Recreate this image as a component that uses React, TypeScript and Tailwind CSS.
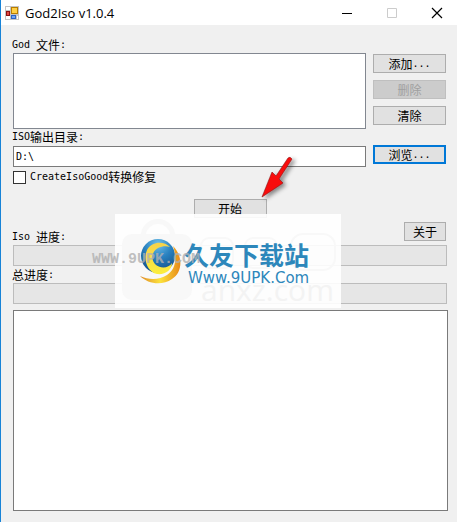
import React, { useState } from "react";

type ButtonProps = {
  label: string;
  suffix?: string;
  disabled?: boolean;
  focused?: boolean;
  className?: string;
};

// Latin glyphs run smaller than the Chinese ones so that both share a 6px / 12px grid
function Latin({ children }: { children: React.ReactNode }) {
  return <span className="font-['DejaVu_Sans_Mono',monospace] text-[10px] whitespace-pre">{children}</span>;
}

function FormButton({ label, suffix, disabled, focused, className = "w-full" }: ButtonProps) {
  return (
    <button
      type="button"
      disabled={disabled}
      className={`flex h-[19px] items-center justify-center leading-4 ${className} ${
        focused
          ? "border-2 border-[#0078d7] bg-[#e1e1e1]"
          : disabled
          ? "border border-[#bfbfbf] bg-[#cccccc] text-[#a0a0a0]"
          : "border border-[#adadad] bg-[#e1e1e1]"
      }`}
    >
      {label}
      {suffix && <Latin>{suffix}</Latin>}
    </button>
  );
}

function ProgressBar({ label, value }: { label: string; value: number }) {
  return (
    <div
      role="progressbar"
      aria-label={label}
      aria-valuenow={value}
      className="h-[21px] border border-[#bcbcbc] bg-[#e6e6e6]"
    >
      <div className="h-full bg-[#06b025]" style={{ width: `${value}%` }} />
    </div>
  );
}

function AppIcon() {
  return (
    <svg className="h-[14px] w-[15px]" viewBox="0 0 15 14" shapeRendering="crispEdges">
      <rect width="14" height="14" fill="#c4c4c4" />
      <path d="M1 1h4v3H1zM1 10h4v3H1zM12 10h1v3h-1z" fill="#fff" />
      <rect x="6" y="1" width="7" height="7" fill="#b87d00" />
      <rect x="7" y="2" width="5" height="5" fill="#ffd045" />
      <rect x="1" y="5" width="4" height="5" fill="#8d1010" />
      <rect x="2" y="6" width="2" height="3" fill="#e04a40" />
      <rect x="6" y="9" width="5" height="4" fill="#2c62c4" />
      <rect x="7" y="10" width="3" height="2" fill="#6ea4f4" />
    </svg>
  );
}

function TitleBar() {
  return (
    <header className="flex h-[25px] items-center gap-[5px] bg-white pl-1">
      <AppIcon />
      <h1 className="flex-1 font-['Open_Sans',sans-serif] text-[13px] leading-6">God2Iso v1.0.4</h1>
      <button type="button" aria-label="Minimize" className="flex w-10 justify-center">
        <svg className="h-3 w-3" viewBox="0 0 12 12" shapeRendering="crispEdges">
          <path d="M1 6h10v1H1z" />
        </svg>
      </button>
      <button type="button" aria-label="Maximize" disabled className="flex w-10 justify-center">
        <svg className="h-3 w-3" viewBox="0 0 12 12" fill="none" stroke="#cccccc">
          <path d="M1.5 1.5h9v9h-9z" />
        </svg>
      </button>
      <button type="button" aria-label="Close" className="flex w-10 justify-center">
        <svg className="h-3 w-3" viewBox="0 0 12 12" stroke="#000" strokeWidth="1.2">
          <path d="M1 1l10 10M11 1L1 11" />
        </svg>
      </button>
    </header>
  );
}

function Pointer() {
  return (
    <svg className="absolute -top-15 left-[145px] h-12 w-9 overflow-visible" viewBox="0 0 36 48">
      <defs>
        <filter id="pointer-shadow" x="-30%" y="-30%" width="180%" height="180%">
          <feDropShadow dx="3" dy="2" stdDeviation="2" floodOpacity="0.45" />
        </filter>
      </defs>
      <path
        d="M2 43L12 18L16 22L28 4Q30 2 32 5L19 25L23 29Z"
        fill="#f80808"
        stroke="#8a1010"
        strokeWidth="0.6"
        filter="url(#pointer-shadow)"
      />
    </svg>
  );
}

function Globe() {
  return (
    <svg className="h-12 w-[45px] shrink-0" viewBox="0 0 45 48">
      <defs>
        <radialGradient id="globe-blue" cx="0.5" cy="0.15" r="0.8">
          <stop offset="0" stopColor="#6fc0ea" />
          <stop offset="0.5" stopColor="#2a82c0" />
          <stop offset="1" stopColor="#15558f" />
        </radialGradient>
        <linearGradient id="globe-gold" x1="0" y1="0" x2="0" y2="1">
          <stop offset="0" stopColor="#f6d24a" />
          <stop offset="1" stopColor="#fbee3e" />
        </linearGradient>
        <linearGradient id="globe-orange" x1="0" y1="0" x2="1" y2="0">
          <stop offset="0" stopColor="#e08a28" />
          <stop offset="0.5" stopColor="#fce23c" />
          <stop offset="1" stopColor="#e88a18" />
        </linearGradient>
      </defs>
      <circle cx="19" cy="18" r="17" fill="url(#globe-blue)" />
      <path
        d="M31 9C25 3 13 3 8 12C4 21 8 34 18 36C26 37 33 32 33 25C30 30 22 31 17 27C11 22 13 13 19 10C23 8 28 8 31 9Z"
        fill="url(#globe-gold)"
      />
      <path
        d="M34 8C44 18 44 34 33 41C23 48 9 46 1 38C10 42 20 42 28 37C37 31 38 20 34 8Z"
        fill="url(#globe-orange)"
      />
    </svg>
  );
}

function Watermark() {
  return (
    <div className="absolute top-[214px] left-[114px] h-[94px] w-[226px] bg-white/90">
      <Pointer />
      <svg className="absolute top-0 left-0 h-full w-full" viewBox="0 0 226 94" fill="none">
        <rect x="7" y="20" width="70" height="66" rx="10" fill="#f8f8f8" />
        <path d="M28 24c0-22 30-22 30 0" stroke="#f8f8f8" strokeWidth="5" />
        <g stroke="#f8f8f8" strokeWidth="2">
          <rect x="86" y="24" width="32" height="30" rx="8" />
          <rect x="130" y="24" width="32" height="30" rx="8" />
          <rect x="176" y="20" width="44" height="36" rx="12" />
        </g>
      </svg>
      <span className="absolute top-15 left-[86px] font-['Open_Sans',sans-serif] text-[30px] leading-8 text-[#f3f3f3]">
        anxz.com
      </span>
      <div className="absolute top-6 left-6 flex">
        <Globe />
        <div className="whitespace-nowrap text-[#2d87bb]">
          <p className="text-[25px] leading-8 font-bold">久友下载站</p>
          <p className="pl-1 font-['DejaVu_Sans',sans-serif] text-[15px] leading-4">Www.9UPK.Com</p>
        </div>
      </div>
      <span className="absolute top-9 -left-[23px] font-['Liberation_Mono',monospace] text-[15px] leading-5 font-bold text-[#b0b0b0]/80">
        WWW.9UPK.COM
      </span>
    </div>
  );
}

export default function App() {
  const [outputDir, setOutputDir] = useState("D:\\");
  const [fixCreate, setFixCreate] = useState(false);

  return (
    <div className="relative flex min-h-screen flex-col border-l border-[#1883d7] bg-[#f0f0f0] font-['Noto_Sans_CJK_SC',sans-serif] text-[12px] leading-4 text-black">
      <TitleBar />

      <main className="flex flex-1 flex-col pt-3 pr-[9px] pb-[11px] pl-3">
        <div className="mr-px">
          {/* Source files and output folder */}
          <div className="mr-px flex gap-[7px]">
            <div className="min-w-0 flex-1">
              <label htmlFor="files" className="-ml-px flex h-4 items-center">
                <Latin>God </Latin>文件<Latin>:</Latin>
              </label>
              <select id="files" size={4} className="block h-[76px] w-full border border-[#828790] bg-white" />
              <label htmlFor="output" className="-ml-px flex h-4 items-center">
                <Latin>ISO</Latin>输出目录<Latin>:</Latin>
              </label>
              <input
                id="output"
                value={outputDir}
                onChange={(e) => setOutputDir(e.target.value)}
                className="mt-px block h-[21px] w-full border border-[#7a7a7a] bg-white px-0.5 font-['DejaVu_Sans_Mono',monospace] text-[10px]"
              />
            </div>
            <div className="flex w-[73px] flex-col justify-between pt-[17px] pb-[3px]">
              <div className="flex flex-col gap-[7px]">
                <FormButton label="添加" suffix="..." />
                <FormButton label="删除" disabled />
                <FormButton label="清除" />
              </div>
              <FormButton label="浏览" suffix="..." focused />
            </div>
          </div>

          <label className="mt-0.5 flex h-4 items-center gap-1">
            <input
              type="checkbox"
              checked={fixCreate}
              onChange={(e) => setFixCreate(e.target.checked)}
              className="h-[13px] w-[13px] appearance-none border border-[#333333] bg-white checked:bg-[#0078d7]"
            />
            <span className="flex items-center">
              <Latin>CreateIsoGood</Latin>转换修复
            </span>
          </label>

          <div className="mt-3.5 flex justify-center">
            <FormButton label="开始" className="w-[73px]" />
          </div>

          {/* Progress */}
          <div className="mt-1 flex h-[23px] items-start justify-between">
            <span className="-ml-px flex h-4 items-center self-end">
              <Latin>Iso </Latin>进度<Latin>:</Latin>
            </span>
            <FormButton label="关于" className="mr-px w-[42px]" />
          </div>
          <ProgressBar label="Iso 进度" value={0} />
          <span className="-ml-px flex h-[17px] items-center">
            总进度<Latin>:</Latin>
          </span>
          <ProgressBar label="总进度" value={0} />
        </div>

        <textarea
          readOnly
          aria-label="Log"
          className="mt-1.5 block w-full flex-1 resize-none border border-[#7a7a7a] bg-white"
        />
      </main>

      <Watermark />
    </div>
  );
}
